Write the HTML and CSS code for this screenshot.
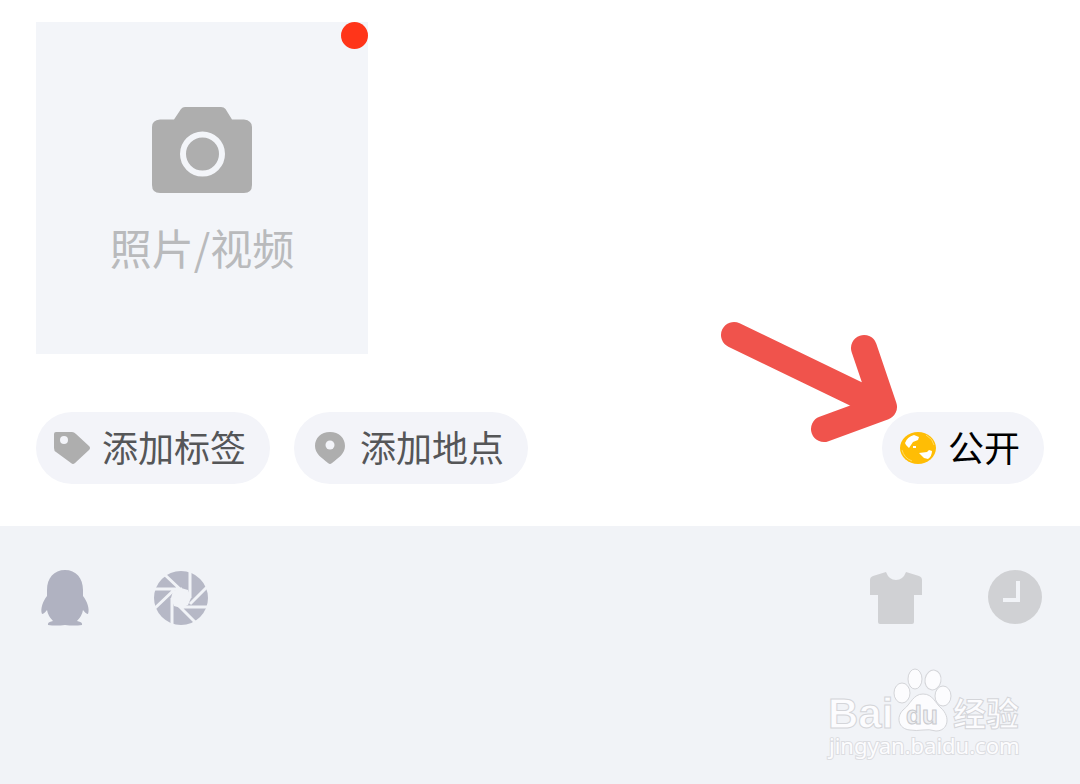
FILE: index.html
```html
<!DOCTYPE html>
<html lang="zh-CN">
<head>
  <meta charset="UTF-8">
  <meta name="viewport" content="width=device-width, initial-scale=1">
  <title>发表说说</title>
  <link rel="stylesheet" href="styles.css">
</head>
<body>
  <main class="editor">
    <button type="button" class="upload">
      <svg class="camera" viewBox="0 0 100 86" aria-hidden="true">
        <path fill="#aeaeae" d="M8 12.500H22L29 2Q30.500 0 33 0H69Q72 0 73.500 2L80 12.500H92Q100 13.500 100 20V78Q100 86 92 86H8Q0 86 0 78V20Q0 13 8 12.500Z"/>
        <circle cx="50.500" cy="47" r="19.500" fill="none" stroke="#f3f5f9" stroke-width="6"/>
      </svg>
      <span>照片/视频</span>
      <i class="badge"></i>
    </button>

    <div class="options">
      <button type="button" class="chip">
        <svg viewBox="0 0 36 36" aria-hidden="true">
          <path fill="#aeaeae" d="M2 2H18Q20 2 22 4L35 16Q37 18 35 20L21 33Q19 35 17 33L2 22Q0 21 0 18V4Q0 2 2 2Z"/>
          <circle cx="10" cy="10" r="4" fill="#f3f4f9"/>
        </svg>
        <span>添加标签</span>
      </button>
      <button type="button" class="chip">
        <svg viewBox="0 0 36 36" aria-hidden="true">
          <path fill="#aeaeae" d="M18 2C9 2 3 8 3 16C3 24 10 28 16 33Q18 35 20 33C26 28 33 24 33 16C33 8 27 2 18 2Z"/>
          <circle cx="18" cy="15" r="4.500" fill="#f3f4f9"/>
        </svg>
        <span>添加地点</span>
      </button>
      <button type="button" class="chip chip-public">
        <svg viewBox="0 0 36 36" aria-hidden="true">
          <ellipse cx="18" cy="18" rx="18" ry="16" fill="#ffbd05"/>
          <path fill="none" stroke="#ffdc62" d="M2 20Q4 28 12 31M26 5Q33 9 34 15"/>
          <path fill="#fff" d="M5 13Q7 7 14 5L19 7L18 10L13 12L11 15L9 18L6 15ZM13 16H16V18H13Z"/>
          <path fill="#fff" d="M19 23L27 22L29 20L32 21Q32 26 28 29L24 28Z"/>
        </svg>
        <span>公开</span>
      </button>
      <svg class="arrow" viewBox="0 0 190 135" aria-hidden="true">
        <path d="M19 20L168 92M149 33L169 92L109 114"/>
      </svg>
    </div>
  </main>

  <footer class="toolbar">
    <button type="button" class="tool" aria-label="QQ">
      <svg viewBox="0 0 56 56" aria-hidden="true">
        <path fill="#b0b2c1" d="M29 0C18 0 11 8 11 20V26C7 31 4 39 6 44Q8 44 11 40Q12 46 17 51Q11 52 12 55Q20 56 29 55Q38 56 46 55Q47 52 41 51Q46 46 47 40Q50 44 52 44C54 39 51 31 47 26V20C47 8 40 0 29 0Z"/>
      </svg>
    </button>
    <button type="button" class="tool" aria-label="滤镜">
      <svg viewBox="0 0 56 56" aria-hidden="true">
        <circle cx="27" cy="28" r="27" fill="#b6b8c6"/>
        <path fill="#f1f3f7" d="M27 18L34 20L37 28L34 35L27 38L20 36L17 28L19 21Z"/>
        <path fill="none" stroke="#f1f3f7" stroke-width="3" d="M10 4L28 21M36 0V28M54 16L36 34M56 37H26M43 54L25 36M18 56V28M0 39L20 20M0 19H28"/>
      </svg>
    </button>
    <button type="button" class="tool tool-right" aria-label="装扮">
      <svg viewBox="0 0 56 56" aria-hidden="true">
        <path fill="#d0d1d4" d="M16 2Q19 10 26 10Q33 10 36 2L49 6Q52 7 52 10V25H44V52Q44 54 42 54H10Q8 54 8 52V25H0V10Q0 7 3 6Z"/>
      </svg>
    </button>
    <button type="button" class="tool" aria-label="定时">
      <svg viewBox="0 0 56 56" aria-hidden="true">
        <circle cx="27" cy="27" r="27" fill="#d0d1d4"/>
        <path fill="none" stroke="#f1f3f7" stroke-width="4" d="M30 11V30H15"/>
      </svg>
    </button>
  </footer>

  <svg class="watermark" viewBox="0 0 210 110" role="img" aria-label="Baidu 经验">
    <g class="mark">
      <text class="latin" x="8" y="68">Bai</text>
      <ellipse cx="82" cy="33" rx="8" ry="10"/>
      <ellipse cx="95" cy="19" rx="7" ry="10"/>
      <ellipse cx="113" cy="20" rx="8" ry="10" transform="rotate(10 113 20)"/>
      <ellipse cx="123" cy="36" rx="8" ry="10"/>
      <path d="M103 34C113 34 115 43 121 48C131 57 128 71 116 71Q109 69 103 70Q96 71 90 70C78 69 76 57 83 50C91 44 93 34 103 34Z"/>
      <text class="du" x="86" y="64">du</text>
      <text class="cjk" x="133" y="66">经验</text>
    </g>
    <text class="url" x="9" y="94">jingyan.baidu.com</text>
  </svg>
</body>
</html>
```
FILE: styles.css
```css
* {
  box-sizing: border-box;
}
body {
  margin: 0;
  min-height: 100vh;
  display: flex;
  flex-direction: column;
  position: relative;
  background: #fff;
  font-family: "Noto Sans CJK SC", sans-serif;
}
button {
  border: none;
  padding: 0;
  font-family: inherit;
  cursor: pointer;
}
svg {
  display: block;
}

.editor {
  padding: 22px 36px 42px;
}
.upload {
  position: relative;
  display: flex;
  flex-direction: column;
  align-items: center;
  justify-content: center;
  gap: 24px;
  width: 332px;
  aspect-ratio: 1;
  padding-top: 8px;
  background: #f3f5f9;
  color: #b9babc;
  font-size: 42px;
  line-height: 60px;
}
.camera {
  width: 100px;
}
.badge {
  position: absolute;
  top: 0;
  right: 0;
  width: 27px;
  height: 27px;
  border-radius: 50%;
  background: #ff3519;
}

.options {
  position: relative;
  display: flex;
  gap: 24px;
  margin-top: 58px;
}
.chip {
  display: flex;
  align-items: center;
  gap: 12px;
  height: 72px;
  padding: 0 24px 0 18px;
  border-radius: 36px;
  background: #f3f4f9;
  color: #555658;
  font-size: 36px;
  line-height: 52px;
}
.chip span {
  padding-bottom: 4px;
}
.chip svg {
  width: 36px;
  height: 36px;
}
.chip-public {
  margin-left: auto;
  color: #000;
}
.arrow {
  position: absolute;
  right: 139px;
  bottom: 34px;
  width: 190px;
  pointer-events: none;
}
.arrow path {
  fill: none;
  stroke: #f0534c;
  stroke-width: 26px;
  stroke-linecap: round;
  stroke-linejoin: round;
}

.toolbar {
  flex: 1;
  display: flex;
  align-items: flex-start;
  gap: 62px;
  padding: 44px 36px;
  background: #f1f3f7;
}
.tool {
  background: none;
}
.tool svg {
  width: 56px;
  height: 56px;
}
.tool-right {
  margin-left: auto;
}

.watermark {
  position: absolute;
  right: 50px;
  bottom: 14px;
  width: 210px;
  pointer-events: none;
}
.mark {
  fill: #fcfcfe;
  stroke: #d4d5d9;
  stroke-width: 1px;
}
.latin {
  font: bold 42px "Liberation Sans", sans-serif;
}
.du {
  font: bold 26px "Liberation Sans", sans-serif;
  fill: #eeeff2;
  stroke: #c9cace;
}
.cjk {
  font: bold 33px "Noto Sans CJK SC", sans-serif;
}
.url {
  font: 22px "Noto Sans", sans-serif;
  fill: #fcfcfe;
  stroke: #dcdde1;
  stroke-width: 2px;
  paint-order: stroke;
}
```
